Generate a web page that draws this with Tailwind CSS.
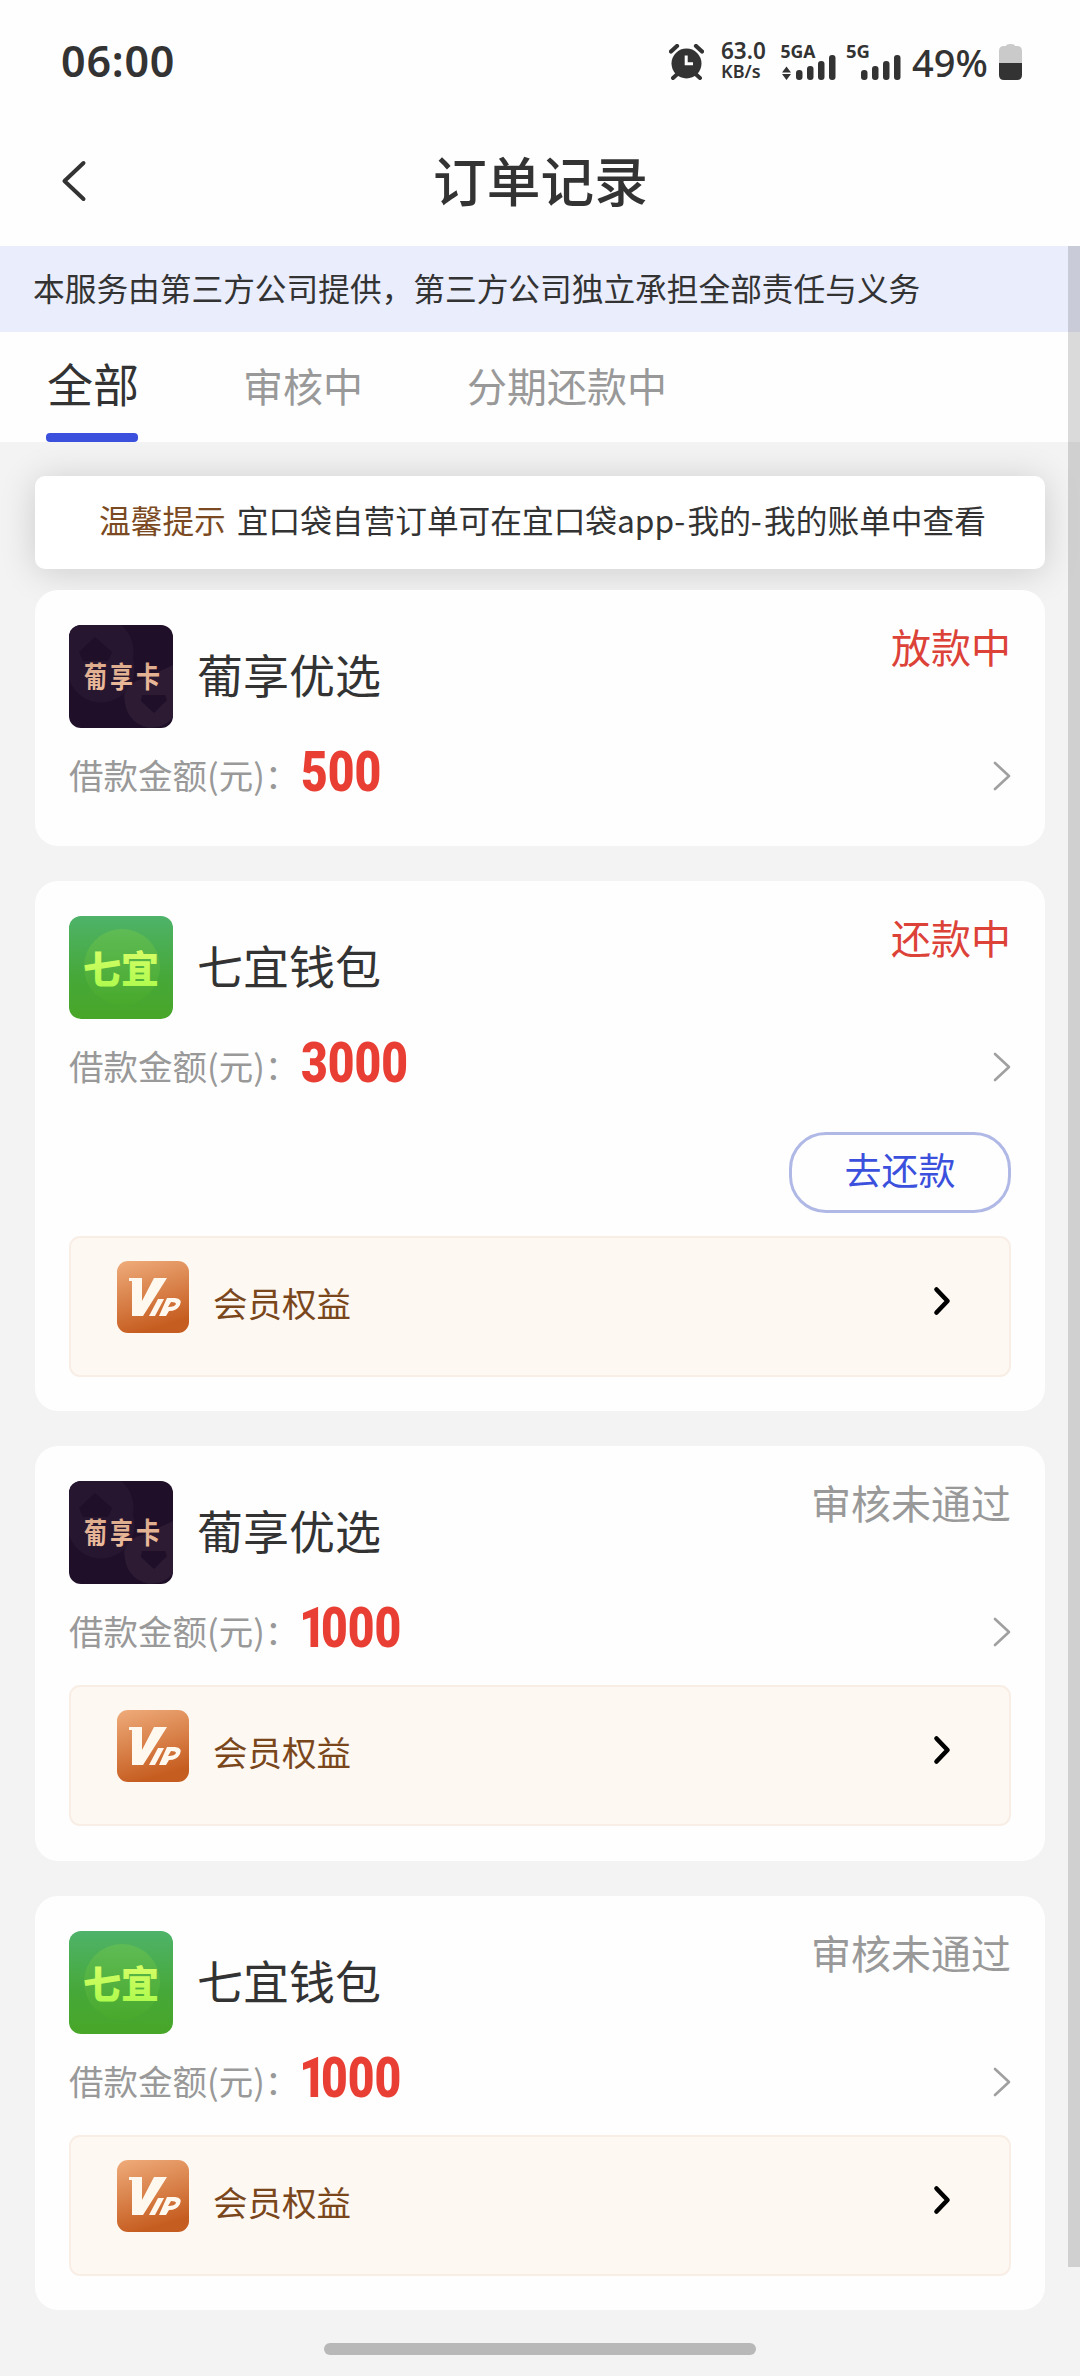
<!DOCTYPE html>
<html lang="zh-CN">
<head>
<meta charset="utf-8">
<title>订单记录</title>
<script src="https://cdn.jsdelivr.net/npm/@tailwindcss/browser@4"></script>
</head>
<body class="relative h-[2376px] w-[1080px] overflow-hidden bg-[#f3f3f3] font-['Noto_Sans_CJK_SC',sans-serif] text-[#333]">
<svg class="absolute size-0">
  <defs>
    <linearGradient id="green" x1="0" y1="0" x2="0" y2="1"><stop offset="0" stop-color="#4eb369"/><stop offset="0.6" stop-color="#46a838"/><stop offset="1" stop-color="#48a628"/></linearGradient>
    <linearGradient id="disc" x1="0" y1="0" x2="0" y2="1"><stop offset="0" stop-color="#5fbb55"/><stop offset="1" stop-color="#48a92c"/></linearGradient>
    <linearGradient id="lime" x1="0" y1="0" x2="0" y2="1"><stop offset="0" stop-color="#e2ff6e"/><stop offset="1" stop-color="#a8fa4a"/></linearGradient>
    <linearGradient id="copper" x1="0" y1="0" x2="0.3" y2="1"><stop offset="0" stop-color="#efac7b"/><stop offset="1" stop-color="#c65d20"/></linearGradient>
    <linearGradient id="rose" x1="0" y1="0" x2="0" y2="1"><stop offset="0" stop-color="#d8a688"/><stop offset="1" stop-color="#efbf9f"/></linearGradient>
  </defs>
  <symbol id="pu" viewBox="0 0 104 103">
    <rect width="104" height="103" fill="#1f0f28"/>
    <path d="M0 0H52A32 34 0 0 1 64 34A33 33 0 0 1 0 54Z" fill="#271630"/>
    <path d="M26 12 43 27 39 36H14L10 27Z" fill="#1f0f28"/>
    <path d="M55 70Q60 56 74 54L104 40V92Q96 103 80 103Q56 98 55 70Z" fill="#2c1b33"/>
    <path d="M73 70H96L98 75 85 88 72 76Z" fill="#1f0f28"/>
    <g fill="url(#rose)" font-family="Noto Sans CJK SC" font-weight="700" font-size="29"><text x="15" y="63" textLength="23" lengthAdjust="spacingAndGlyphs">葡</text><text x="41" y="63" textLength="23" lengthAdjust="spacingAndGlyphs">享</text><text x="67" y="63" textLength="24" lengthAdjust="spacingAndGlyphs">卡</text></g>
  </symbol>
  <symbol id="qi" viewBox="0 0 104 103">
    <rect width="104" height="103" fill="url(#green)"/>
    <circle cx="53" cy="51" r="38" fill="url(#disc)"/>
    <g fill="url(#lime)" font-family="Noto Sans CJK SC" font-weight="900" font-size="38"><text x="14" y="67" textLength="37">七</text><text x="52" y="67" textLength="38">宜</text></g>
  </symbol>
  <symbol id="vip" viewBox="0 0 72 72">
    <rect width="72" height="72" rx="11" fill="url(#copper)"/>
    <g fill="#fff8ef"><path d="M12 17H25V40L37 17H50L26 55H15V20H12Z"/><path d="M41 38H47L38 55H32Z"/><path fill-rule="evenodd" d="M50 37H58Q66 38 63 44Q60 50 52 50L49 55H42ZM54 41 51 46Q58 46 59 43Q59 41 54 41Z"/></g>
  </symbol>
  <symbol id="more" viewBox="0 0 18 30"><path d="M2 2 16 15 2 28" fill="none" stroke="#a0a0a0" stroke-width="2.600" stroke-linecap="round" stroke-linejoin="round"/></symbol>
  <symbol id="go" viewBox="0 0 18 30"><path d="M3.500 3.500 14.500 15 3.500 26.500" fill="none" stroke="#000" stroke-width="4.600" stroke-linecap="round" stroke-linejoin="round"/></symbol>
</svg>

<header class="h-[246px] bg-[#fefefe]">
  <div class="flex h-[124px] items-start pt-[44px] pl-[61px] font-['Noto_Sans',sans-serif]">
    <div class="-mt-px w-[608px] text-[43px] leading-9 font-semibold tracking-[0.8px]">06:00</div>
    <svg class="h-9 w-[35px]" viewBox="0 0 35 36"><g stroke="#333" fill="none"><path d="M2 7.500 8 2M33 7.500 27 2" stroke-width="4.200" stroke-linecap="round"/><path d="M4 34 9 29.500M31 34 26 29.500" stroke-width="4" stroke-linecap="round"/><circle cx="17.500" cy="19.500" r="15" fill="#333" stroke="none"/><path d="M17.200 11.500V19.800H24" stroke="#fff" stroke-width="3"/></g></svg>
    <div class="-mt-1 ml-[17px] w-[59px] font-semibold"><div class="text-[22.500px] leading-[22px]">63.0</div><div class="text-[18px] leading-[18px]">KB/s</div></div>
    <svg class="h-9 w-[122px] overflow-visible" viewBox="0 0 122 36" fill="#333"><text x="0.500" y="14" font-size="18" font-weight="700" font-family="Noto Sans" textLength="35" lengthAdjust="spacingAndGlyphs">5GA</text><text x="66" y="14" font-size="18" font-weight="700" font-family="Noto Sans" textLength="24" lengthAdjust="spacingAndGlyphs">5G</text><path d="M2 28.500 6.500 22.500 11 28.500ZM2 30 6.500 36 11 30Z"/><rect x="16" y="26" width="6.500" height="10" rx="3"/><rect x="27" y="22" width="6.500" height="14" rx="3"/><rect x="38" y="17" width="6.500" height="19" rx="3"/><rect x="49" y="11" width="6.500" height="25" rx="3"/><rect x="81" y="26" width="6.500" height="10" rx="3"/><rect x="92" y="22" width="6.500" height="14" rx="3"/><rect x="103" y="17" width="6.500" height="19" rx="3"/><rect x="114" y="11" width="6.500" height="25" rx="3"/></svg>
    <div class="ml-2.5 w-[85px] text-[38px] leading-9 font-medium">49%</div>
    <svg class="ml-0.5 h-9 w-[23px]" viewBox="0 0 23 36"><path d="M7 2Q7 0 11.500 0T16 2H18Q23 2 23 7V19H0V7Q0 2 5 2Z" fill="#cacaca"/><path d="M0 19H23V31Q23 36 18 36H5Q0 36 0 31Z" fill="#333"/></svg>
  </div>
  <div class="flex h-[114px] items-center">
    <svg class="ml-[61px] h-[42px] w-[26px]" viewBox="0 0 26 42"><path d="M22.500 3 3.500 21 22.500 39" fill="none" stroke="#333" stroke-width="4" stroke-linecap="round" stroke-linejoin="round"/></svg>
    <h1 class="mr-[86px] flex-1 pb-1 text-center text-[53.700px] leading-[80px] font-medium">订单记录</h1>
  </div>
</header>

<div class="h-[86px] bg-[#eaedfc] pl-[33px] text-[31.700px] leading-[83px] whitespace-nowrap">本服务由第三方公司提供，第三方公司独立承担全部责任与义务</div>

<nav class="relative z-10 flex h-[110px] bg-[#fefefe] pl-[46px] whitespace-nowrap">
  <div class="w-[92px] pl-px text-[46px] leading-[100px]">全部</div>
  <div class="ml-[105px] w-[120px] text-[40px] leading-[106px] text-[#999]">审核中</div>
  <div class="ml-[104px] text-[40px] leading-[106px] text-[#999]">分期还款中</div>
  <div class="absolute bottom-0 left-[46px] h-[9px] w-[92px] rounded bg-[#3b50dc]"></div>
</nav>

<main class="px-[35px] pt-[34px]">
  <div class="h-[93px] rounded-[10px] bg-white pl-[64px] text-[31.700px] leading-[87px] whitespace-nowrap shadow-[0_3px_36px_rgba(0,0,0,0.16)]"><span class="text-[#7b4a22]">温馨提示</span><span class="ml-[11px]">宜口袋自营订单可在宜口袋app<span class="tracking-[2.300px]">-</span>我的<span class="tracking-[2.300px]">-</span>我的账单中查看</span></div>

  <div class="relative mt-[21px] flex flex-col gap-[35px]">
    <section class="h-[256px] rounded-[23px] bg-[#fefefe] px-[34px] pt-[35px]">
      <div class="flex h-[103px]"><svg class="h-[103px] w-[104px] rounded-xl"><use href="#pu"/></svg><h2 class="ml-[24px] text-[46px] leading-[97px]">葡享优选</h2><div class="ml-auto text-[40px] leading-[42px] text-[#dc4238]">放款中</div></div>
      <div class="flex h-[84px] items-center pt-2 text-[34.500px] leading-[50px] text-[#999]"><div class="w-[232px] whitespace-nowrap">借款金额(元)：</div><div class="origin-left scale-x-[0.84] pb-1 font-['Roboto',sans-serif] text-[55px] font-black text-[#e83e33]">500</div><svg class="mt-1 ml-auto h-[30px] w-[18px]"><use href="#more"/></svg></div>
    </section>

    <section class="h-[530px] rounded-[23px] bg-[#fefefe] px-[34px] pt-[35px]">
      <div class="flex h-[103px]"><svg class="h-[103px] w-[104px] rounded-xl"><use href="#qi"/></svg><h2 class="ml-[24px] text-[46px] leading-[97px]">七宜钱包</h2><div class="ml-auto text-[40px] leading-[42px] text-[#dc4238]">还款中</div></div>
      <div class="flex h-[84px] items-center pt-2 text-[34.500px] leading-[50px] text-[#999]"><div class="w-[232px] whitespace-nowrap">借款金额(元)：</div><div class="origin-left scale-x-[0.84] pb-1 font-['Roboto',sans-serif] text-[55px] font-black text-[#e83e33]">3000</div><svg class="mt-1 ml-auto h-[30px] w-[18px]"><use href="#more"/></svg></div>
      <div class="mt-[29px] ml-auto h-[81px] w-[222px] rounded-[37px] border-[3px] border-[#b0b8e6] text-center text-[37px] leading-[69px] text-[#3b50dc]">去还款</div>
      <div class="mt-[23px] flex h-[141px] rounded-[11px] border-2 border-[#f8eee6] bg-[#fdf8f2] pt-[23px] pl-[46px]"><svg class="size-[72px]"><use href="#vip"/></svg><div class="ml-6 text-[34.500px] leading-[83px] text-[#7a471c]">会员权益</div><svg class="mt-[25px] mr-[58px] ml-auto h-[30px] w-[18px]"><use href="#go"/></svg></div>
    </section>

    <section class="h-[414.600px] rounded-[23px] bg-[#fefefe] px-[34px] pt-[35px]">
      <div class="flex h-[103px]"><svg class="h-[103px] w-[104px] rounded-xl"><use href="#pu"/></svg><h2 class="ml-[24px] text-[46px] leading-[97px]">葡享优选</h2><div class="ml-auto text-[40px] leading-[42px] text-[#999]">审核未通过</div></div>
      <div class="flex h-[84px] items-center pt-2 text-[34.500px] leading-[50px] text-[#999]"><div class="w-[232px] whitespace-nowrap">借款金额(元)：</div><div class="origin-left scale-x-[0.84] pb-1 font-['Roboto',sans-serif] text-[55px] font-black text-[#e83e33]"><span class="-ml-0.5 tracking-[-6px]">1</span>000</div><svg class="mt-1 ml-auto h-[30px] w-[18px]"><use href="#more"/></svg></div>
      <div class="mt-[17px] flex h-[141px] rounded-[11px] border-2 border-[#f8eee6] bg-[#fdf8f2] pt-[23px] pl-[46px]"><svg class="size-[72px]"><use href="#vip"/></svg><div class="ml-6 text-[34.500px] leading-[83px] text-[#7a471c]">会员权益</div><svg class="mt-[25px] mr-[58px] ml-auto h-[30px] w-[18px]"><use href="#go"/></svg></div>
    </section>

    <section class="h-[414.600px] rounded-[23px] bg-[#fefefe] px-[34px] pt-[35px]">
      <div class="flex h-[103px]"><svg class="h-[103px] w-[104px] rounded-xl"><use href="#qi"/></svg><h2 class="ml-[24px] text-[46px] leading-[97px]">七宜钱包</h2><div class="ml-auto text-[40px] leading-[42px] text-[#999]">审核未通过</div></div>
      <div class="flex h-[84px] items-center pt-2 text-[34.500px] leading-[50px] text-[#999]"><div class="w-[232px] whitespace-nowrap">借款金额(元)：</div><div class="origin-left scale-x-[0.84] pb-1 font-['Roboto',sans-serif] text-[55px] font-black text-[#e83e33]"><span class="-ml-0.5 tracking-[-6px]">1</span>000</div><svg class="mt-1 ml-auto h-[30px] w-[18px]"><use href="#more"/></svg></div>
      <div class="mt-[17px] flex h-[141px] rounded-[11px] border-2 border-[#f8eee6] bg-[#fdf8f2] pt-[23px] pl-[46px]"><svg class="size-[72px]"><use href="#vip"/></svg><div class="ml-6 text-[34.500px] leading-[83px] text-[#7a471c]">会员权益</div><svg class="mt-[25px] mr-[58px] ml-auto h-[30px] w-[18px]"><use href="#go"/></svg></div>
    </section>
  </div>
</main>

<div class="mx-auto mt-[33px] h-3 w-[432px] rounded-full bg-[#b8b8b8]"></div>
<div class="absolute top-[246px] right-0 z-20 h-[2021px] w-3 bg-black/14"></div>
</body>
</html>
